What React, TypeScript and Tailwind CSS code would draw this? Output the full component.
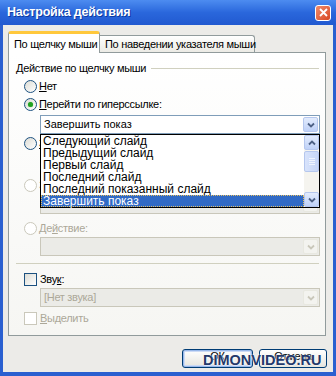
import React from "react";

const chev = (color: string, up = false) => (
  <svg width="8" height="6" viewBox="0 0 8 6" className={up ? "rotate-180" : ""}>
    <path d="M1 1.5 L4 4.5 L7 1.5" fill="none" stroke={color} strokeWidth="1.8" />
  </svg>
);

function Radio({ checked = false, disabled = false }: { checked?: boolean; disabled?: boolean }) {
  return (
    <span
      className={`w-[13px] h-[13px] rounded-full border flex items-center justify-center shrink-0 ${
        disabled
          ? "border-[#cac8bb] bg-white"
          : "border-[#1c5180] bg-gradient-to-br from-[#dcdcd5] to-white"
      }`}
    >
      {checked && <span className="w-[5px] h-[5px] rounded-full bg-[#21a121] shadow-[0_0_1px_#5fce5f]" />}
    </span>
  );
}

function Check({ disabled = false }: { disabled?: boolean }) {
  return (
    <span
      className={`w-[13px] h-[13px] border shrink-0 ${
        disabled
          ? "border-[#cac8bb] bg-white"
          : "border-[#1c5180] bg-gradient-to-br from-[#dcdcd5] to-white"
      }`}
    />
  );
}

function ScrollBtn({ up = false, disabled = false }: { up?: boolean; disabled?: boolean }) {
  return (
    <span
      className={`w-[15px] h-[15px] rounded-[2px] border flex items-center justify-center ${
        disabled
          ? "border-[#e8e8e0] bg-[#f3f3ef]"
          : "border-[#b5c7ee] bg-gradient-to-b from-[#e3ecfd] to-[#bfd1f7]"
      }`}
    >
      {chev(disabled ? "#c9c7ba" : "#4d6185", up)}
    </span>
  );
}

function Combo({ text, disabled = false }: { text?: string; disabled?: boolean }) {
  return (
    <div
      className={`h-[19px] ml-[24px] border flex items-center pl-[3px] pr-[1px] ${
        disabled ? "border-[#c9c7ba] bg-[#ebebe7] text-[#aca899]" : "border-[#7f9db9] bg-white text-black"
      }`}
    >
      <span className="flex-1 whitespace-nowrap">{text}</span>
      <ScrollBtn disabled={disabled} />
    </div>
  );
}

const items = [
  "Следующий слайд",
  "Предыдущий слайд",
  "Первый слайд",
  "Последний слайд",
  "Последний показанный слайд",
  "Завершить показ",
];

export default function App() {
  return (
    <div className="relative w-[336px] h-[376px] bg-[#2a5fd0] flex flex-col font-['Liberation_Sans',sans-serif] text-[11px] leading-[13px] text-black whitespace-nowrap">
      <div className="h-[25px] shrink-0 bg-gradient-to-b from-[#4d8cf0] via-[#2a67dc] to-[#2159d0] flex items-center pl-[7px] pr-[5px]">
        <span className="flex-1 text-white font-bold text-[12.5px] tracking-[-0.2px] [text-shadow:1px_1px_0_#0d3aa0]">
          Настройка действия
        </span>
        <span className="w-[16px] h-[16px] rounded-[3px] border border-white bg-gradient-to-br from-[#f08a6a] to-[#d8461e] flex items-center justify-center">
          <svg width="9" height="9" viewBox="0 0 9 9">
            <path d="M1 1 L8 8 M8 1 L1 8" stroke="white" strokeWidth="1.8" />
          </svg>
        </span>
      </div>

      <div className="flex-1 mx-[3px] mb-[4px] bg-[#ecebe8] flex flex-col pl-[5px] pr-[7px] pt-[6px] tracking-[-0.3px]">
        {/* tabs */}
        <div className="flex items-end h-[21px] relative z-10">
          <div className="h-[22px] w-[92px] bg-white border-x border-[#919b9c] border-t-[3px] border-t-[#ffc83c] rounded-t-[3px] pl-[5px] pt-[4px] mb-[-1px]">
            По щелчку мыши
          </div>
          <div className="h-[17px] w-[155px] bg-gradient-to-b from-white to-[#ecebe5] border border-b-0 border-[#919b9c] border-l-0 rounded-tr-[3px] pl-[5px] pt-[2px]">
            По наведении указателя мыши
          </div>
        </div>

        {/* panel */}
        <div className="border border-[#919b9c] bg-gradient-to-b from-white to-[#f6f6f3] pl-[7px] pr-[5px] pb-[10px] flex flex-col">
          <div className="mt-[8px] h-[14px] flex items-center gap-[5px]">
            <span>Действие по щелчку мыши</span>
            <span className="flex-1 h-px bg-[#d0d0bf] mr-[1px]" />
          </div>
          <div className="mt-[5px] h-[13px] flex items-center gap-[1px] ml-[8px]">
            <Radio />
            <span className="ml-[1px]"><u>Н</u>ет</span>
          </div>
          <div className="mt-[5px] h-[13px] flex items-center gap-[1px] ml-[8px]">
            <Radio checked />
            <span className="ml-[1px]"><u>П</u>ерейти по гиперссылке:</span>
          </div>
          <div className="mt-[4px] relative z-20 tracking-normal">
            <Combo text="Завершить показ" />
            <div className="absolute top-full left-[24px] right-0 h-[74px] border border-black bg-white flex text-[12px]">
              <div className="flex-1 flex flex-col">
                {items.map((t, i) =>
                  i === items.length - 1 ? (
                    <div
                      key={t}
                      className="h-[12px] pl-[2px] bg-[#316ac5] text-white outline outline-1 outline-dotted outline-[#e8c060] -outline-offset-1 leading-[12px]"
                    >
                      {t}
                    </div>
                  ) : (
                    <div key={t} className="h-[12px] pl-[2px] leading-[12px]">
                      {t}
                    </div>
                  )
                )}
              </div>
              <div className="w-[15px] bg-[#f5f4ef] flex flex-col justify-between">
                <ScrollBtn up />
                <span className="mt-[1px] mb-auto w-[15px] h-[21px] rounded-[2px] border border-[#b5c7ee] bg-gradient-to-r from-[#d8e3fb] to-[#c6d6f8] flex flex-col items-center justify-center gap-[1px]">
                  <span className="w-[6px] h-px bg-[#eef4fe]" />
                  <span className="w-[6px] h-px bg-[#eef4fe]" />
                  <span className="w-[6px] h-px bg-[#eef4fe]" />
                  <span className="w-[6px] h-px bg-[#eef4fe]" />
                </span>
                <ScrollBtn />
              </div>
            </div>
          </div>
          <div className="mt-[3px] h-[13px] flex items-center gap-[1px] ml-[8px]">
            <Radio />
            <span className="ml-[1px]"><u>З</u>апуск программы:</span>
          </div>
          <div className="mt-[2px] h-[20px]" />
          <div className="mt-[7px] h-[13px] flex items-center gap-[1px] ml-[8px] text-[#aca899]">
            <Radio disabled />
            <span className="ml-[1px]">Запуск макроса:</span>
          </div>
          <div className="mt-[3px]">
            <Combo disabled />
          </div>
          <div className="mt-[8px] h-[13px] flex items-center gap-[1px] ml-[8px] text-[#aca899]">
            <Radio disabled />
            <span className="ml-[1px]">Де<u>й</u>ствие:</span>
          </div>
          <div className="mt-[2px]">
            <Combo disabled />
          </div>
          <div className="mt-[7px] h-px bg-[#d0d0bf] mr-[1px]" />
          <div className="mt-[9px] h-[13px] flex items-center gap-[1px] ml-[8px]">
            <Check />
            <span className="ml-[2px]">Зву<u>к</u>:</span>
          </div>
          <div className="mt-[2px]">
            <Combo text="[Нет звука]" disabled />
          </div>
          <div className="mt-[5px] h-[13px] flex items-center gap-[1px] ml-[8px] text-[#aca899]">
            <Check disabled />
            <span className="ml-[2px]"><u>В</u>ыделить</span>
          </div>
        </div>

        {/* buttons */}
        <div className="mt-[13px] flex justify-end gap-[6px]">
          <button className="w-[71px] h-[19px] rounded-[3px] border border-[#003c74] bg-gradient-to-b from-white to-[#e6e5de] shadow-[inset_0_0_0_1px_#98b8ea,inset_0_0_0_2px_#cddbf5] text-[11px] leading-[13px] text-black pb-[4px]">
            ОК
          </button>
          <button className="w-[68px] h-[19px] rounded-[3px] border border-[#003c74] bg-gradient-to-b from-white to-[#e6e5de] text-[11px] leading-[13px] text-black mr-[-1px] pb-[4px]">
            Отмена
          </button>
        </div>
      </div>

      <div className="absolute left-[203px] top-[353px] font-['Liberation_Sans',sans-serif] font-bold text-[14.5px] leading-[14px] text-[#24396a] [text-shadow:0_0_2px_#fff,0_0_1px_#fff]">
        DIMONVIDEO.RU
      </div>
    </div>
  );
}
